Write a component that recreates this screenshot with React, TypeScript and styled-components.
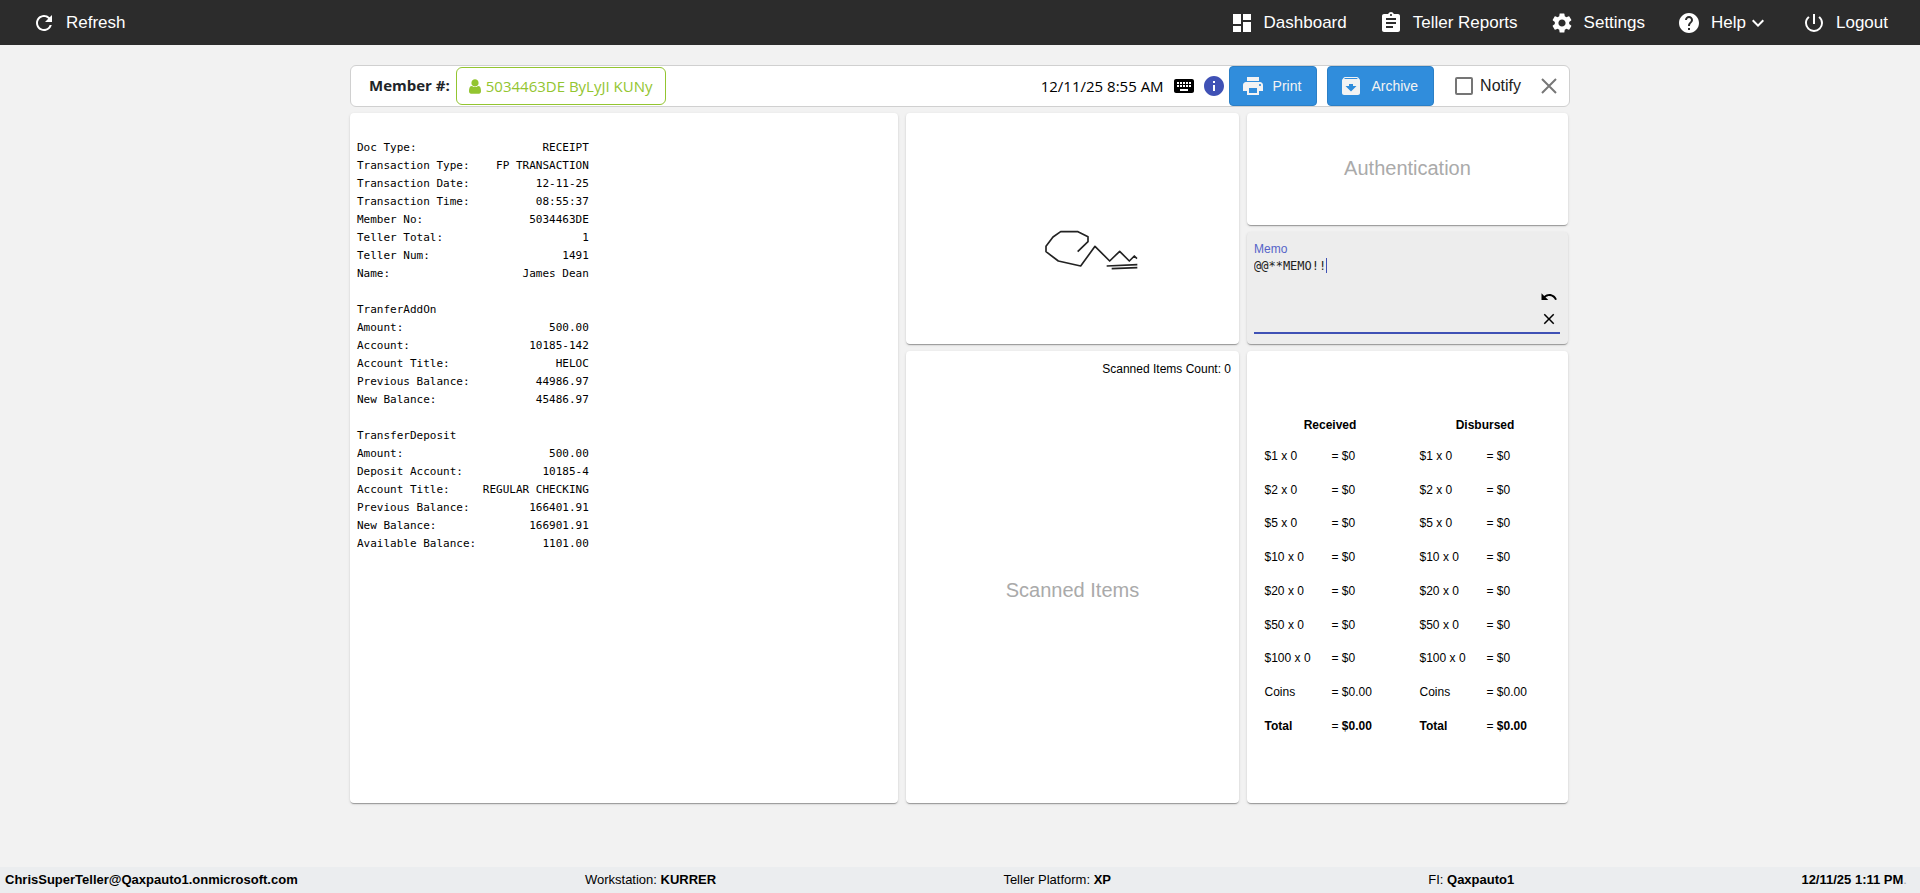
import React, { useState } from "react";
import styled, { createGlobalStyle } from "styled-components";
import {
  MdArchive,
  MdAssignment,
  MdClose,
  MdDashboard,
  MdHelp,
  MdInfo,
  MdKeyboard,
  MdKeyboardArrowDown,
  MdPowerSettingsNew,
  MdPrint,
  MdRefresh,
  MdSettings,
  MdUndo,
} from "react-icons/md";

const sans = `"Liberation Sans", Arial, sans-serif`;
const humanist = `"Open Sans", "Noto Sans", sans-serif`;
const mono = `"DejaVu Sans Mono", monospace`;

const GlobalStyle = createGlobalStyle`
  *, *::before, *::after { box-sizing: border-box; }
  body { margin: 0; background: #f2f2f2; color: #000; font: 12px/18px ${sans}; }
  button, input, textarea { font: inherit; color: inherit; margin: 0; }
  svg { display: block; flex: none; }
`;

const Page = styled.div`
  min-height: 100vh;
  display: flex;
  flex-direction: column;
`;

/* Top navigation */
const TopBar = styled.header`
  display: flex;
  justify-content: space-between;
  height: 45px;
  padding: 0 32px;
  background: #2c2c2c;
`;

const Nav = styled.nav`
  display: flex;
  gap: 32px;
`;

const NavButton = styled.button`
  display: flex;
  align-items: center;
  padding: 0;
  border: 0;
  background: none;
  color: #fff;
  font-size: 17px;
  line-height: 24px;
  cursor: pointer;
`;

const NavLabel = styled.span`
  margin-left: 10px;
`;

/* Work area */
const Main = styled.main`
  flex: 1;
  width: 100%;
  max-width: 1220px;
  margin: 0 auto;
  padding: 20px 0;
`;

const MemberBar = styled.section`
  display: flex;
  align-items: center;
  justify-content: space-between;
  height: 42px;
  padding: 0 8px 0 18px;
  border: 1px solid #d0d0d0;
  border-radius: 6px;
  background: #fff;
`;

const BarGroup = styled.div`
  display: flex;
  align-items: center;
`;

const MemberLabel = styled.span`
  margin-right: 6px;
  padding-bottom: 2px;
  color: #212529;
  font: 700 15px/24px ${humanist};
`;

const MemberButton = styled.button`
  display: flex;
  align-items: center;
  gap: 5px;
  height: 38px;
  padding: 0 12px;
  border: 1px solid #93c530;
  border-radius: 6px;
  background: #fff;
  color: #93c530;
  font: 400 15px/24px ${humanist};
  cursor: pointer;
`;

const Timestamp = styled.time`
  margin-right: 8px;
  font: 400 15px/24px ${humanist};
`;

const IconButton = styled.button<{ $tone?: string; $size: number }>`
  display: grid;
  place-items: center;
  width: ${(p) => p.$size}px;
  height: ${(p) => p.$size}px;
  padding: 0;
  border: 0;
  background: none;
  color: ${(p) => p.$tone ?? "#000"};
  cursor: pointer;
`;

const Tools = styled.div`
  display: flex;
  gap: 6px;
  margin-right: 3px;
`;

const ActionButton = styled.button`
  display: flex;
  align-items: center;
  gap: 8px;
  height: 40px;
  margin-right: 10px;
  padding: 0 15px 0 11px;
  border: 1px solid #2b7fc6;
  border-radius: 4px;
  background: #308ddc;
  color: #f3f3f3;
  font-size: 14px;
  cursor: pointer;
`;

const NotifyField = styled.label`
  display: flex;
  align-items: center;
  gap: 7px;
  margin: 0 16px 0 11px;
  color: #212121;
  font-size: 16px;
  line-height: 24px;
`;

const CheckBox = styled.input`
  appearance: none;
  width: 18px;
  height: 18px;
  border: 2px solid #757575;
  border-radius: 2px;
  background: #fff;
  &:checked {
    background: #3f51b5;
  }
`;

const Panels = styled.div`
  display: grid;
  grid-template-columns: 548fr 333fr 321fr;
  grid-template-rows: 112px 112px minmax(452px, auto);
  gap: 7px 8px;
  margin-top: 6px;
  padding-right: 2px;
`;

const Card = styled.section<{ $muted?: boolean }>`
  display: flex;
  flex-direction: column;
  min-width: 0;
  border-radius: 4px;
  background: ${(p) => (p.$muted ? "#ededed" : "#fff")};
  box-shadow: 0 2px 1px -1px rgba(0, 0, 0, 0.2), 0 1px 1px rgba(0, 0, 0, 0.14),
    0 1px 3px rgba(0, 0, 0, 0.12);
`;

const ReceiptCard = styled(Card)`
  grid-row: 1 / 4;
  padding: 26px 7px;
`;

const SignatureCard = styled(Card)`
  grid-row: 1 / 3;
  grid-column: 2;
  align-items: center;
  justify-content: center;
`;

const Placeholder = styled.h2`
  flex: 1;
  display: flex;
  align-items: center;
  justify-content: center;
  margin: 0;
  padding-bottom: 2px;
  color: #aaa;
  font-size: 20px;
  font-weight: 400;
  line-height: 24px;
`;

/* Receipt */
const ReceiptBlock = styled.dl`
  width: 35ch;
  margin: 0 0 18px;
  font: 11px/18px ${mono};
`;

const ReceiptTitle = styled.div`
  font: 11px/18px ${mono};
`;

const ReceiptLine = styled.div`
  display: flex;
  justify-content: space-between;
`;

const ReceiptValue = styled.dd`
  margin: 0;
`;

/* Memo */
const MemoBody = styled.div`
  position: relative;
  flex: 1;
  display: flex;
  flex-direction: column;
  margin: 9px 8px 10px 7px;
  border-bottom: 2px solid #3f51b5;
`;

const MemoLabel = styled.label`
  color: #5564c8;
  font-size: 12px;
  line-height: 16px;
`;

const MemoInput = styled.textarea`
  flex: 1;
  width: 100%;
  padding: 0;
  border: 0;
  outline: 0;
  resize: none;
  background: none;
  color: #212121;
  font: 12px/18px ${mono};
`;

const Caret = styled.span`
  position: absolute;
  top: 17px;
  left: 10ch;
  width: 1px;
  height: 15px;
  background: #3f51b5;
  font: 12px/18px ${mono};
`;

const MemoActions = styled.div`
  position: absolute;
  right: 2px;
  bottom: 4px;
  display: grid;
  gap: 4px;
`;

/* Scanned items */
const ItemCount = styled.p`
  margin: 0;
  padding: 9px 8px 0;
  line-height: 18px;
  text-align: right;
`;

/* Cash */
const CashCard = styled(Card)`
  flex-direction: row;
  align-items: center;
  justify-content: center;
  gap: 24px;
`;

const CashTable = styled.table`
  width: 131px;
  height: 332px;
  border-collapse: collapse;
  table-layout: fixed;
  font-size: 12px;
  line-height: 18px;
  th,
  td {
    padding: 0;
    white-space: nowrap;
    text-align: left;
    vertical-align: middle;
    font-weight: 400;
  }
  thead th {
    height: 28px;
    text-align: center;
    font-weight: 700;
  }
`;

const DenominationCol = styled.col`
  width: 67px;
`;

/* Status bar */
const StatusBar = styled.footer`
  display: flex;
  align-items: center;
  justify-content: space-between;
  height: 26px;
  padding: 0 13px 0 5px;
  background: #ebedef;
  font-size: 13px;
  line-height: 18px;
`;

const StatusItem = styled.span<{ $wide?: boolean }>`
  padding-right: ${(p) => (p.$wide ? 30 : 0)}px;
`;

const Faint = styled.span`
  color: #aaa;
`;

type Line = [string, string];

const receipt: { title?: string; lines: Line[] }[] = [
  {
    lines: [
      ["Doc Type:", "RECEIPT"],
      ["Transaction Type:", "FP TRANSACTION"],
      ["Transaction Date:", "12-11-25"],
      ["Transaction Time:", "08:55:37"],
      ["Member No:", "5034463DE"],
      ["Teller Total:", "1"],
      ["Teller Num:", "1491"],
      ["Name:", "James Dean"],
    ],
  },
  {
    title: "TranferAddOn",
    lines: [
      ["Amount:", "500.00"],
      ["Account:", "10185-142"],
      ["Account Title:", "HELOC"],
      ["Previous Balance:", "44986.97"],
      ["New Balance:", "45486.97"],
    ],
  },
  {
    title: "TransferDeposit",
    lines: [
      ["Amount:", "500.00"],
      ["Deposit Account:", "10185-4"],
      ["Account Title:", "REGULAR CHECKING"],
      ["Previous Balance:", "166401.91"],
      ["New Balance:", "166901.91"],
      ["Available Balance:", "1101.00"],
    ],
  },
];

const bills = [1, 2, 5, 10, 20, 50, 100];

function UserIcon() {
  return (
    <svg width="12" height="15" viewBox="0 128 1280 1536" fill="currentColor" aria-hidden="true">
      <path d="M1280 1399q0 109-62.500 187t-150.500 78h-854q-88 0-150.500-78t-62.500-187q0-85 8.500-160.500t31.500-152 58.500-131 94-89 134.500-34.500q131 128 313 128t313-128q76 0 134.500 34.500t94 89 58.500 131 31.500 152 8.500 160.500zm-256-887q0 159-112.500 271.500t-271.500 112.500-271.500-112.500-112.500-271.500 112.500-271.500 271.500-112.500 271.500 112.500 112.500 271.500z" />
    </svg>
  );
}

function Signature() {
  return (
    <svg
      width="134"
      height="87"
      viewBox="346 254 402 261"
      fill="none"
      stroke="#222"
      strokeWidth="5"
      strokeLinejoin="round"
      role="img"
      aria-label="Signature"
    >
      <path d="M561 454 592 424V409L562 394H510L487 410 466 438V454L503 482 570 497 613 438 657 482 687 453 716 482 731 467 739 475" />
      <path d="M648 497 740 493M663 505 740 502" />
    </svg>
  );
}

function Cash({ title }: { title: string }) {
  return (
    <CashTable>
      <colgroup>
        <DenominationCol />
        <col />
      </colgroup>
      <thead>
        <tr>
          <th colSpan={2} scope="colgroup">{title}</th>
        </tr>
      </thead>
      <tbody>
        {bills.map((b) => (
          <tr key={b}>
            <th scope="row">${b} x 0</th>
            <td>= $0</td>
          </tr>
        ))}
        <tr>
          <th scope="row">Coins</th>
          <td>= $0.00</td>
        </tr>
        <tr>
          <th scope="row"><b>Total</b></th>
          <td>= <b>$0.00</b></td>
        </tr>
      </tbody>
    </CashTable>
  );
}

export default function App() {
  const [memo, setMemo] = useState("@@**MEMO!!");
  const [notify, setNotify] = useState(false);

  return (
    <>
      <GlobalStyle />
      <Page>
        <TopBar>
          <Nav aria-label="Page">
            <NavButton><MdRefresh size={24} /><NavLabel>Refresh</NavLabel></NavButton>
          </Nav>
          <Nav aria-label="Main">
            <NavButton><MdDashboard size={24} /><NavLabel>Dashboard</NavLabel></NavButton>
            <NavButton><MdAssignment size={24} /><NavLabel>Teller Reports</NavLabel></NavButton>
            <NavButton><MdSettings size={24} /><NavLabel>Settings</NavLabel></NavButton>
            <NavButton>
              <MdHelp size={24} /><NavLabel>Help</NavLabel>
              <MdKeyboardArrowDown size={24} stroke="currentColor" />
            </NavButton>
            <NavButton><MdPowerSettingsNew size={24} /><NavLabel>Logout</NavLabel></NavButton>
          </Nav>
        </TopBar>

        <Main>
          <MemberBar>
            <BarGroup>
              <MemberLabel>Member #:</MemberLabel>
              <MemberButton><UserIcon />5034463DE ByLyJI KUNy</MemberButton>
            </BarGroup>
            <BarGroup>
              <Timestamp>12/11/25 8:55 AM</Timestamp>
              <Tools>
                <IconButton $size={24} aria-label="Keyboard"><MdKeyboard size={24} /></IconButton>
                <IconButton $size={24} $tone="#3f51b5" aria-label="Information"><MdInfo size={24} /></IconButton>
              </Tools>
              <ActionButton><MdPrint size={24} />Print</ActionButton>
              <ActionButton><MdArchive size={24} />Archive</ActionButton>
              <NotifyField>
                <CheckBox type="checkbox" checked={notify} onChange={(e) => setNotify(e.target.checked)} />
                Notify
              </NotifyField>
              <IconButton $size={24} $tone="#777" aria-label="Close">
                <svg width="24" height="24" viewBox="0 0 24 24" fill="none" stroke="currentColor" strokeWidth="2">
                  <path d="M5 5 19 19M19 5 5 19" />
                </svg>
              </IconButton>
            </BarGroup>
          </MemberBar>

          <Panels>
            <ReceiptCard>
              {receipt.map((block, i) => (
                <React.Fragment key={i}>
                  {block.title && <ReceiptTitle>{block.title}</ReceiptTitle>}
                  <ReceiptBlock>
                    {block.lines.map(([label, value]) => (
                      <ReceiptLine key={label}>
                        <dt>{label}</dt>
                        <ReceiptValue>{value}</ReceiptValue>
                      </ReceiptLine>
                    ))}
                  </ReceiptBlock>
                </React.Fragment>
              ))}
            </ReceiptCard>

            <SignatureCard><Signature /></SignatureCard>

            <Card><Placeholder>Authentication</Placeholder></Card>

            <Card $muted>
              <MemoBody>
                <MemoLabel htmlFor="memo">Memo</MemoLabel>
                <MemoInput id="memo" spellCheck={false} value={memo} onChange={(e) => setMemo(e.target.value)} />
                <Caret />
                <MemoActions>
                  <IconButton $size={18} aria-label="Undo"><MdUndo size={18} /></IconButton>
                  <IconButton $size={18} aria-label="Clear" onClick={() => setMemo("")}><MdClose size={18} /></IconButton>
                </MemoActions>
              </MemoBody>
            </Card>

            <Card>
              <ItemCount>Scanned Items Count: 0</ItemCount>
              <Placeholder>Scanned Items</Placeholder>
            </Card>

            <CashCard>
              <Cash title="Received" />
              <Cash title="Disbursed" />
            </CashCard>
          </Panels>
        </Main>

        <StatusBar>
          <StatusItem><b>ChrisSuperTeller@Qaxpauto1.onmicrosoft.com</b></StatusItem>
          <StatusItem>Workstation: <b>KURRER</b></StatusItem>
          <StatusItem $wide>Teller Platform: <b>XP</b></StatusItem>
          <StatusItem>FI: <b>Qaxpauto1</b></StatusItem>
          <StatusItem><b>12/11/25 1:11 PM</b><Faint>.</Faint></StatusItem>
        </StatusBar>
      </Page>
    </>
  );
}
